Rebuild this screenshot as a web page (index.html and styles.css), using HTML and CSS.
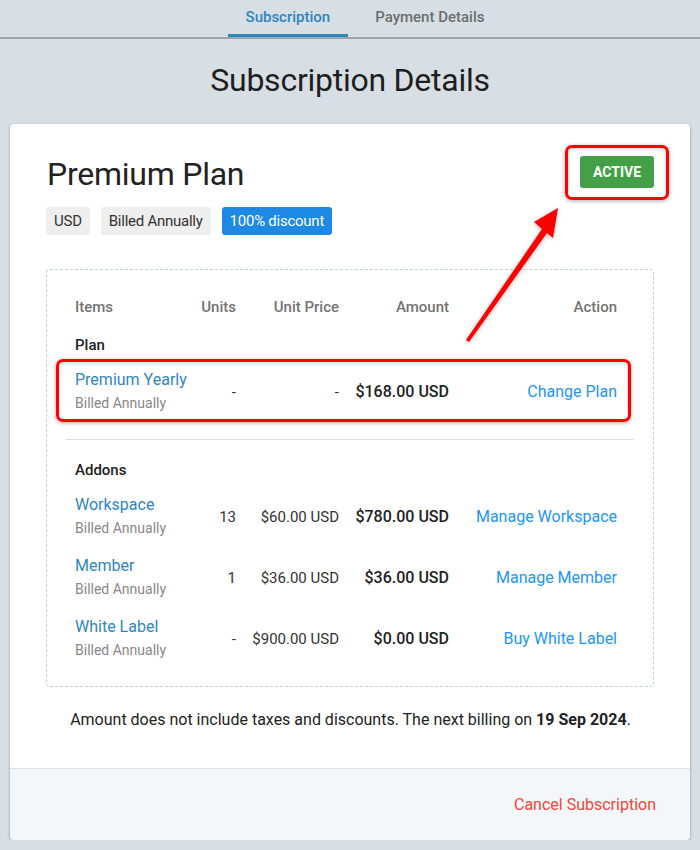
FILE: index.html
```html
<!DOCTYPE html>
<html lang="en">
<head>
    <meta charset="UTF-8">
    <title>Subscription Details</title>
    <meta name="viewport" content="width=device-width, initial-scale=1">
    <link rel="stylesheet" href="styles.css">
</head>
<body>
    <nav class="tabs">
        <a class="tab tab-active">Subscription</a>
        <a class="tab">Payment Details</a>
    </nav>

    <h1 class="page-title">Subscription Details</h1>

    <div class="card">
        <div class="card-body">
            <div class="plan-head">
                <h2 class="plan-name">Premium Plan</h2>
                <div class="status-wrap">
                    <span class="status">Active</span>
                    <span class="callout callout-status"></span>
                </div>
            </div>
            <div class="tags">
                <span class="tag">USD</span>
                <span class="tag">Billed Annually</span>
                <span class="tag tag-blue">100% discount</span>
            </div>

            <div class="items">
                <div class="grid head-row">
                    <div>Items</div>
                    <div class="num">Units</div>
                    <div class="num">Unit Price</div>
                    <div class="num">Amount</div>
                    <div class="num">Action</div>
                </div>

                <div class="group-label">Plan</div>
                <div class="grid item-row">
                    <div>
                        <div class="item-name">Premium Yearly</div>
                        <div class="item-sub">Billed Annually</div>
                    </div>
                    <div class="num">-</div>
                    <div class="num">-</div>
                    <div class="num amount">$168.00 USD</div>
                    <div class="num"><a class="action">Change Plan</a></div>
                    <span class="callout callout-row"></span>
                </div>

                <hr class="sep">

                <div class="group-label">Addons</div>
                <div class="grid item-row">
                    <div>
                        <div class="item-name">Workspace</div>
                        <div class="item-sub">Billed Annually</div>
                    </div>
                    <div class="num">13</div>
                    <div class="num">$60.00 USD</div>
                    <div class="num amount">$780.00 USD</div>
                    <div class="num"><a class="action">Manage Workspace</a></div>
                </div>
                <div class="grid item-row">
                    <div>
                        <div class="item-name">Member</div>
                        <div class="item-sub">Billed Annually</div>
                    </div>
                    <div class="num">1</div>
                    <div class="num">$36.00 USD</div>
                    <div class="num amount">$36.00 USD</div>
                    <div class="num"><a class="action">Manage Member</a></div>
                </div>
                <div class="grid item-row">
                    <div>
                        <div class="item-name">White Label</div>
                        <div class="item-sub">Billed Annually</div>
                    </div>
                    <div class="num">-</div>
                    <div class="num">$900.00 USD</div>
                    <div class="num amount">$0.00 USD</div>
                    <div class="num"><a class="action">Buy White Label</a></div>
                </div>
            </div>

            <p class="note">Amount does not include taxes and discounts. The next billing on <b>19 Sep 2024</b>.</p>
        </div>

        <div class="card-foot">
            <a class="cancel">Cancel Subscription</a>
        </div>

        <svg class="arrow" width="110" height="145" viewBox="0 0 110 145">
            <polygon points="6,140 82,29 74,22 98,8 93,38 87,33 9,142" fill="#ff0000"/>
        </svg>
    </div>
</body>
</html>
```

FILE: styles.css
```css
body { margin: 0; background: #d7dfe4; font-family: Roboto, "Liberation Sans", sans-serif; color: #222; }

.tabs { display: flex; justify-content: center; gap: 9px; height: 37px; padding-left: 30px; border-bottom: 2px solid #9da5aa; }
.tab { padding: 0 18px; font-size: 15px; font-weight: 500; line-height: 34px; color: #6e6e6e; border-bottom: 3px solid transparent; }
.tab-active { color: #2e86c1; border-bottom-color: #2e86c1; }

.page-title { margin: 21px 0 24px; font-size: 32px; font-weight: 400; line-height: 40px; letter-spacing: -0.25px; text-align: center; color: #1e1e1e; }

.card { position: relative; margin: 0 10px; background: #fff; border-radius: 4px; box-shadow: 0 1px 3px rgba(0,0,0,.35); overflow: hidden; }
.card-body { padding: 31px 36px 36px 37px; }

.plan-head { display: flex; justify-content: space-between; align-items: flex-start; }
.plan-name { margin: 0; font-size: 32px; font-weight: 400; line-height: 38px; letter-spacing: -0.25px; color: #222; }
.status-wrap { position: relative; margin-top: 1px; }
.status { display: block; width: 74px; height: 32px; line-height: 32px; text-align: center; background: #43a047; color: #fff; font-size: 14px; font-weight: 700; text-transform: uppercase; border-radius: 3px; }

.callout { position: absolute; border: 3px solid #ff0000; border-radius: 7px; box-shadow: 0 1px 4px rgba(0,0,0,.35), inset 0 1px 4px rgba(0,0,0,.2); pointer-events: none; }
.callout-status { top: -11px; bottom: -12px; left: -15px; right: -15px; }
.callout-row { top: -2px; bottom: 0; left: -19px; right: -14px; }

.tags { display: flex; gap: 11px; margin-top: 14px; margin-left: -1px; }
.tag { height: 28px; line-height: 28px; padding: 0 8px; font-size: 15px; letter-spacing: -0.25px; background: #eeeeee; color: #333; border-radius: 3px; }
.tag-blue { background: #1e88e5; color: #fff; }

.items { margin-top: 34px; margin-left: -1px; padding: 14px 36px 17px 28px; border: 1px dashed #c5ced6; border-radius: 4px; }
.grid { display: grid; grid-template-columns: 1fr 46px 103px 110px 168px; align-items: center; }
.num { text-align: right; }
.head-row { height: 45px; font-size: 15px; font-weight: 500; color: #737373; }
.group-label { height: 32px; line-height: 32px; font-size: 15px; font-weight: 500; color: #222; }
.item-row { position: relative; padding: 7px 0; font-size: 15px; color: #333; }
.item-name { font-size: 16px; line-height: 24px; color: #2e86c1; }
.item-sub { font-size: 14px; line-height: 23px; color: #888; }
.amount { font-size: 16px; font-weight: 500; color: #222; }
.action { font-size: 16px; color: #2196f3; cursor: pointer; }
.sep { margin: 17px -17px 14px -9px; border: 0; border-top: 1px solid #dddddd; }

.note { margin: 21px 0 0; font-size: 16px; line-height: 24px; text-align: center; color: #222; }
.note b { font-weight: 700; }

.card-foot { height: 71px; display: flex; align-items: center; justify-content: flex-end; padding-right: 34px; background: #f4f7fa; border-top: 1px solid #dbe1e6; }
.cancel { font-size: 16px; color: #f44336; cursor: pointer; }

.arrow { position: absolute; left: 450px; top: 76px; filter: drop-shadow(0 1px 2px rgba(0,0,0,.3)); }
```
